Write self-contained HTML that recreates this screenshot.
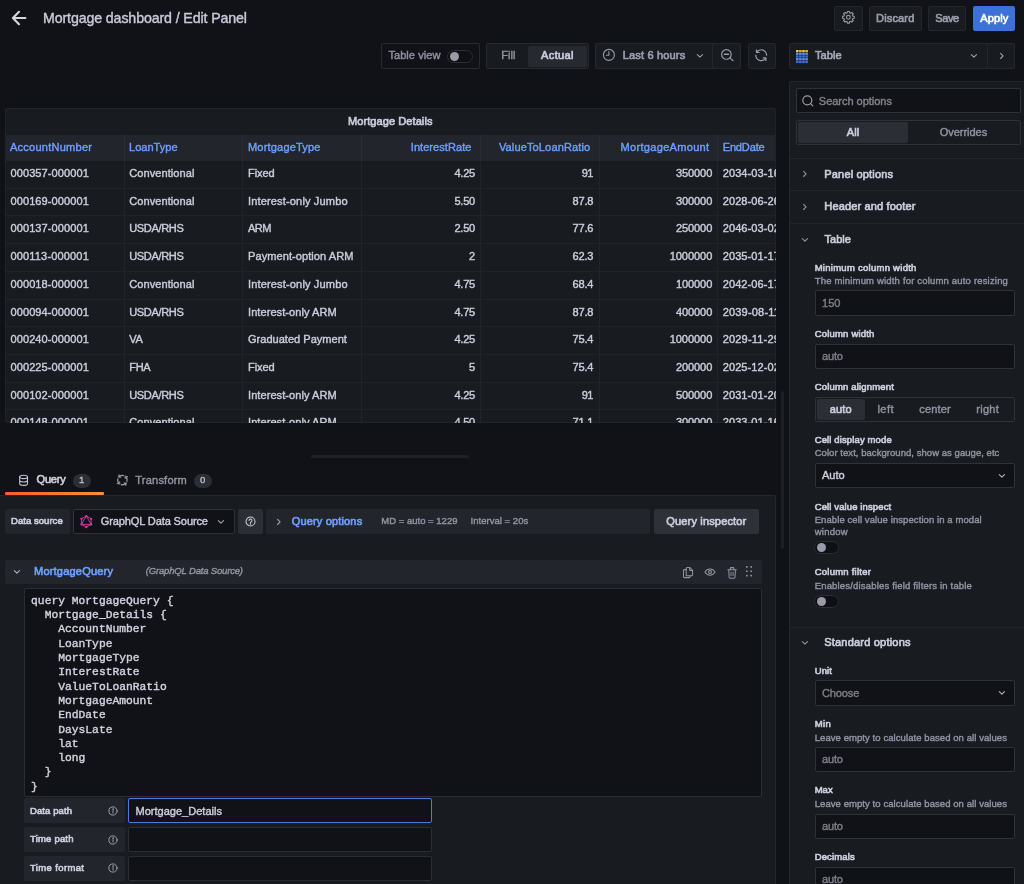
<!DOCTYPE html>
<html lang="en"><head><meta charset="utf-8"><title>Mortgage dashboard / Edit Panel - Grafana</title>
<style>
html,body{margin:0;padding:0;background:#111217;}
body{width:1024px;height:884px;position:relative;overflow:hidden;font-family:"Liberation Sans",sans-serif;}
#app{position:absolute;left:0;top:0;width:1024px;height:884px;overflow:hidden;will-change:transform;}
.b{position:absolute;box-sizing:border-box;}
.t{position:absolute;white-space:pre;margin:0;padding:0;font-weight:400;}
</style></head><body>
<div id="app">
<header class="page-toolbar">
<svg class="b" style="left:11px;top:9px" width="17" height="18" viewBox="0 0 17 18" fill="none" stroke="#d5d5e3" stroke-width="2.1" stroke-linecap="round" stroke-linejoin="round"><path d="M14.4 9H2.4M8 2.8L1.9 9L8 15.2"/></svg>
<h1 class="t" style="left:43.00px;top:8.49px;line-height:20px;font-size:14.2px;color:#c9c9d9;-webkit-text-stroke:0.4px;letter-spacing:-0.115px;">Mortgage dashboard / Edit Panel</h1>
<div class="b" style="left:834px;top:6px;width:29px;height:25px;background:#181b1f;border:1px solid #24272d;border-radius:2px;"></div>
<div class="b" style="left:869px;top:6px;width:53px;height:25px;background:#181b1f;border:1px solid #24272d;border-radius:2px;"></div>
<div class="b" style="left:928px;top:6px;width:38px;height:25px;background:#181b1f;border:1px solid #24272d;border-radius:2px;"></div>
<div class="b" style="left:973px;top:6px;width:42px;height:25px;background:#3d71d9;border-radius:2px;"></div>
<span class="t" style="left:876.10px;top:9.75px;line-height:16px;font-size:11.05px;color:#9d9dad;-webkit-text-stroke:0.65px;letter-spacing:0.124px;">Discard</span>
<span class="t" style="left:935.20px;top:9.75px;line-height:16px;font-size:11.05px;color:#9d9dad;-webkit-text-stroke:0.65px;letter-spacing:-0.396px;">Save</span>
<span class="t" style="left:980.20px;top:9.75px;line-height:16px;font-size:11.05px;color:#ffffff;-webkit-text-stroke:0.65px;letter-spacing:0.140px;">Apply</span>
</header>
<nav class="panel-toolbar">
<div class="b" style="left:381px;top:43px;width:99px;height:26px;background:#111217;border:1px solid #26292f;border-radius:2px;"></div>
<span class="t" style="left:388.40px;top:46.95px;line-height:16px;font-size:11.05px;color:#9393a2;-webkit-text-stroke:0.4px;letter-spacing:0.047px;">Table view</span>
<div class="b" style="left:447px;top:50px;width:26px;height:12.5px;background:#0f1014;border:1px solid #2b2e34;border-radius:7px;"></div>
<div class="b" style="left:449.8px;top:51.8px;width:9px;height:9px;background:#9a9aa8;border-radius:5px;"></div>
<div class="b" style="left:486px;top:43px;width:103px;height:26px;background:#181b1f;border:1px solid #26292f;border-radius:2px;"></div>
<div class="b" style="left:528px;top:45.5px;width:59px;height:21px;background:#26292f;border-radius:2px;"></div>
<span class="t" style="left:501.34px;top:47.15px;line-height:16px;font-size:11.05px;color:#9393a2;-webkit-text-stroke:0.4px;">Fill</span>
<span class="t" style="left:541.05px;top:47.15px;line-height:16px;font-size:11.05px;color:#ccccdc;-webkit-text-stroke:0.65px;letter-spacing:0.359px;">Actual</span>
<div class="b" style="left:595px;top:43px;width:118px;height:26px;background:#181b1f;border:1px solid #24272d;border-radius:2px;border-top-right-radius:0;border-bottom-right-radius:0;"></div>
<div class="b" style="left:712px;top:43px;width:29px;height:26px;background:#181b1f;border:1px solid #24272d;border-radius:2px;border-top-left-radius:0;border-bottom-left-radius:0;"></div>
<span class="t" style="left:622.70px;top:46.95px;line-height:16px;font-size:11.05px;color:#9d9dad;-webkit-text-stroke:0.65px;letter-spacing:0.155px;">Last 6 hours</span>
<div class="b" style="left:748px;top:43px;width:28px;height:26px;background:#181b1f;border:1px solid #24272d;border-radius:2px;"></div>
<div class="b" style="left:789px;top:43px;width:199px;height:26px;background:#181b1f;border:1px solid #24272d;border-radius:2px;border-top-right-radius:0;border-bottom-right-radius:0;"></div>
<div class="b" style="left:987px;top:43px;width:28px;height:26px;background:#181b1f;border:1px solid #24272d;border-radius:2px;border-top-left-radius:0;border-bottom-left-radius:0;"></div>
<span class="t" style="left:815.00px;top:46.95px;line-height:16px;font-size:11.05px;color:#a6a6b6;-webkit-text-stroke:0.65px;letter-spacing:0.070px;">Table</span>
</nav>
<main class="panel-preview">
<div class="b" style="left:5px;top:108px;width:771px;height:315px;background:#181b1f;border:1px solid #202329;border-radius:2px;"></div>
<h2 class="t" style="left:347.95px;top:112.95px;line-height:16px;font-size:11.05px;color:#ccccdc;-webkit-text-stroke:0.65px;letter-spacing:0.066px;">Mortgage Details</h2>
<div class="b" style="left:6px;top:134.6px;width:769px;height:26.6px;background:#22252b;"></div>
<div class="b" style="left:6px;top:134px;width:769px;height:288.4px;overflow:hidden">
<div class="b" style="left:118.0px;top:1px;width:1px;height:26px;background:#2a2d33"></div>
<div class="b" style="left:118.0px;top:27px;width:1px;height:263px;background:#212429"></div>
<div class="b" style="left:235.6px;top:1px;width:1px;height:26px;background:#2a2d33"></div>
<div class="b" style="left:235.6px;top:27px;width:1px;height:263px;background:#212429"></div>
<div class="b" style="left:355.0px;top:1px;width:1px;height:26px;background:#2a2d33"></div>
<div class="b" style="left:355.0px;top:27px;width:1px;height:263px;background:#212429"></div>
<div class="b" style="left:474.3px;top:1px;width:1px;height:26px;background:#2a2d33"></div>
<div class="b" style="left:474.3px;top:27px;width:1px;height:263px;background:#212429"></div>
<div class="b" style="left:593.0px;top:1px;width:1px;height:26px;background:#2a2d33"></div>
<div class="b" style="left:593.0px;top:27px;width:1px;height:263px;background:#212429"></div>
<div class="b" style="left:711.3px;top:1px;width:1px;height:26px;background:#2a2d33"></div>
<div class="b" style="left:711.3px;top:27px;width:1px;height:263px;background:#212429"></div>
<div class="b" style="left:0;top:53.9px;width:769px;height:1px;background:#202328"></div>
<div class="b" style="left:0;top:81.2px;width:769px;height:1px;background:#202328"></div>
<div class="b" style="left:0;top:109.0px;width:769px;height:1px;background:#202328"></div>
<div class="b" style="left:0;top:136.7px;width:769px;height:1px;background:#202328"></div>
<div class="b" style="left:0;top:165.2px;width:769px;height:1px;background:#202328"></div>
<div class="b" style="left:0;top:192.2px;width:769px;height:1px;background:#202328"></div>
<div class="b" style="left:0;top:219.9px;width:769px;height:1px;background:#202328"></div>
<div class="b" style="left:0;top:247.6px;width:769px;height:1px;background:#202328"></div>
<div class="b" style="left:0;top:275.4px;width:769px;height:1px;background:#202328"></div>
</div>
<span class="t" style="left:10.00px;top:138.65px;line-height:16px;font-size:11.05px;color:#6e9fff;-webkit-text-stroke:0.4px;letter-spacing:0.232px;">AccountNumber</span>
<span class="t" style="left:129.00px;top:138.65px;line-height:16px;font-size:11.05px;color:#6e9fff;-webkit-text-stroke:0.4px;">LoanType</span>
<span class="t" style="left:248.00px;top:138.65px;line-height:16px;font-size:11.05px;color:#6e9fff;-webkit-text-stroke:0.4px;letter-spacing:0.170px;">MortgageType</span>
<span class="t" style="left:410.80px;top:138.65px;line-height:16px;font-size:11.05px;color:#6e9fff;-webkit-text-stroke:0.4px;letter-spacing:0.038px;">InterestRate</span>
<span class="t" style="left:498.90px;top:138.65px;line-height:16px;font-size:11.05px;color:#6e9fff;-webkit-text-stroke:0.4px;letter-spacing:0.122px;">ValueToLoanRatio</span>
<span class="t" style="left:620.60px;top:138.65px;line-height:16px;font-size:11.05px;color:#6e9fff;-webkit-text-stroke:0.4px;letter-spacing:0.288px;">MortgageAmount</span>
<span class="t" style="left:722.70px;top:138.65px;line-height:16px;font-size:11.05px;color:#6e9fff;-webkit-text-stroke:0.4px;letter-spacing:-0.167px;">EndDate</span>
<div class="b" style="left:6px;top:134px;width:769.5px;height:288.6px;overflow:hidden"><div class="b" style="left:-6px;top:-134px;width:1024px;height:884px">
<span class="t" style="left:10.50px;top:165.35px;line-height:16px;font-size:11.05px;color:#ccccdc;-webkit-text-stroke:0.4px;letter-spacing:0.074px;">000357-000001</span>
<span class="t" style="left:129.20px;top:165.35px;line-height:16px;font-size:11.05px;color:#ccccdc;-webkit-text-stroke:0.4px;letter-spacing:0.064px;">Conventional</span>
<span class="t" style="left:248.00px;top:165.35px;line-height:16px;font-size:11.05px;color:#ccccdc;-webkit-text-stroke:0.4px;letter-spacing:-0.104px;">Fixed</span>
<span class="t" style="left:454.40px;top:165.35px;line-height:16px;font-size:11.05px;color:#ccccdc;-webkit-text-stroke:0.4px;letter-spacing:-0.239px;">4.25</span>
<span class="t" style="left:581.80px;top:165.35px;line-height:16px;font-size:11.05px;color:#ccccdc;-webkit-text-stroke:0.4px;letter-spacing:-0.697px;">91</span>
<span class="t" style="left:675.90px;top:165.35px;line-height:16px;font-size:11.05px;color:#ccccdc;-webkit-text-stroke:0.4px;letter-spacing:-0.095px;">350000</span>
<span class="t" style="left:722.70px;top:165.35px;line-height:16px;font-size:11.05px;color:#ccccdc;-webkit-text-stroke:0.4px;letter-spacing:0.076px;">2034-03-16</span>
<span class="t" style="left:10.50px;top:193.05px;line-height:16px;font-size:11.05px;color:#ccccdc;-webkit-text-stroke:0.4px;letter-spacing:0.074px;">000169-000001</span>
<span class="t" style="left:129.20px;top:193.05px;line-height:16px;font-size:11.05px;color:#ccccdc;-webkit-text-stroke:0.4px;letter-spacing:0.064px;">Conventional</span>
<span class="t" style="left:248.00px;top:193.05px;line-height:16px;font-size:11.05px;color:#ccccdc;-webkit-text-stroke:0.4px;letter-spacing:0.144px;">Interest-only Jumbo</span>
<span class="t" style="left:454.40px;top:193.05px;line-height:16px;font-size:11.05px;color:#ccccdc;-webkit-text-stroke:0.4px;letter-spacing:-0.239px;">5.50</span>
<span class="t" style="left:572.60px;top:193.05px;line-height:16px;font-size:11.05px;color:#ccccdc;-webkit-text-stroke:0.4px;letter-spacing:-0.239px;">87.8</span>
<span class="t" style="left:675.90px;top:193.05px;line-height:16px;font-size:11.05px;color:#ccccdc;-webkit-text-stroke:0.4px;letter-spacing:-0.095px;">300000</span>
<span class="t" style="left:722.70px;top:193.05px;line-height:16px;font-size:11.05px;color:#ccccdc;-webkit-text-stroke:0.4px;letter-spacing:0.076px;">2028-06-26</span>
<span class="t" style="left:10.50px;top:220.15px;line-height:16px;font-size:11.05px;color:#ccccdc;-webkit-text-stroke:0.4px;letter-spacing:0.074px;">000137-000001</span>
<span class="t" style="left:129.20px;top:220.15px;line-height:16px;font-size:11.05px;color:#ccccdc;-webkit-text-stroke:0.4px;letter-spacing:-0.342px;">USDA/RHS</span>
<span class="t" style="left:248.00px;top:220.15px;line-height:16px;font-size:11.05px;color:#ccccdc;-webkit-text-stroke:0.4px;letter-spacing:-0.581px;">ARM</span>
<span class="t" style="left:454.40px;top:220.15px;line-height:16px;font-size:11.05px;color:#ccccdc;-webkit-text-stroke:0.4px;letter-spacing:-0.239px;">2.50</span>
<span class="t" style="left:572.60px;top:220.15px;line-height:16px;font-size:11.05px;color:#ccccdc;-webkit-text-stroke:0.4px;letter-spacing:-0.239px;">77.6</span>
<span class="t" style="left:675.90px;top:220.15px;line-height:16px;font-size:11.05px;color:#ccccdc;-webkit-text-stroke:0.4px;letter-spacing:-0.095px;">250000</span>
<span class="t" style="left:722.70px;top:220.15px;line-height:16px;font-size:11.05px;color:#ccccdc;-webkit-text-stroke:0.4px;letter-spacing:0.076px;">2046-03-02</span>
<span class="t" style="left:10.50px;top:248.45px;line-height:16px;font-size:11.05px;color:#ccccdc;-webkit-text-stroke:0.4px;letter-spacing:0.142px;">000113-000001</span>
<span class="t" style="left:129.20px;top:248.45px;line-height:16px;font-size:11.05px;color:#ccccdc;-webkit-text-stroke:0.4px;letter-spacing:-0.342px;">USDA/RHS</span>
<span class="t" style="left:248.00px;top:248.45px;line-height:16px;font-size:11.05px;color:#ccccdc;-webkit-text-stroke:0.4px;letter-spacing:0.065px;">Payment-option ARM</span>
<span class="t" style="left:469.04px;top:248.45px;line-height:16px;font-size:11.05px;color:#ccccdc;-webkit-text-stroke:0.4px;">2</span>
<span class="t" style="left:572.60px;top:248.45px;line-height:16px;font-size:11.05px;color:#ccccdc;-webkit-text-stroke:0.4px;letter-spacing:-0.239px;">62.3</span>
<span class="t" style="left:669.70px;top:248.45px;line-height:16px;font-size:11.05px;color:#ccccdc;-webkit-text-stroke:0.4px;letter-spacing:-0.069px;">1000000</span>
<span class="t" style="left:722.70px;top:248.45px;line-height:16px;font-size:11.05px;color:#ccccdc;-webkit-text-stroke:0.4px;letter-spacing:0.076px;">2035-01-17</span>
<span class="t" style="left:10.50px;top:276.15px;line-height:16px;font-size:11.05px;color:#ccccdc;-webkit-text-stroke:0.4px;letter-spacing:0.074px;">000018-000001</span>
<span class="t" style="left:129.20px;top:276.15px;line-height:16px;font-size:11.05px;color:#ccccdc;-webkit-text-stroke:0.4px;letter-spacing:0.064px;">Conventional</span>
<span class="t" style="left:248.00px;top:276.15px;line-height:16px;font-size:11.05px;color:#ccccdc;-webkit-text-stroke:0.4px;letter-spacing:0.144px;">Interest-only Jumbo</span>
<span class="t" style="left:454.40px;top:276.15px;line-height:16px;font-size:11.05px;color:#ccccdc;-webkit-text-stroke:0.4px;letter-spacing:-0.239px;">4.75</span>
<span class="t" style="left:572.60px;top:276.15px;line-height:16px;font-size:11.05px;color:#ccccdc;-webkit-text-stroke:0.4px;letter-spacing:-0.239px;">68.4</span>
<span class="t" style="left:675.90px;top:276.15px;line-height:16px;font-size:11.05px;color:#ccccdc;-webkit-text-stroke:0.4px;letter-spacing:-0.095px;">100000</span>
<span class="t" style="left:722.70px;top:276.15px;line-height:16px;font-size:11.05px;color:#ccccdc;-webkit-text-stroke:0.4px;letter-spacing:0.076px;">2042-06-17</span>
<span class="t" style="left:10.50px;top:303.85px;line-height:16px;font-size:11.05px;color:#ccccdc;-webkit-text-stroke:0.4px;letter-spacing:0.074px;">000094-000001</span>
<span class="t" style="left:129.20px;top:303.85px;line-height:16px;font-size:11.05px;color:#ccccdc;-webkit-text-stroke:0.4px;letter-spacing:-0.342px;">USDA/RHS</span>
<span class="t" style="left:248.00px;top:303.85px;line-height:16px;font-size:11.05px;color:#ccccdc;-webkit-text-stroke:0.4px;letter-spacing:0.056px;">Interest-only ARM</span>
<span class="t" style="left:454.40px;top:303.85px;line-height:16px;font-size:11.05px;color:#ccccdc;-webkit-text-stroke:0.4px;letter-spacing:-0.239px;">4.75</span>
<span class="t" style="left:572.60px;top:303.85px;line-height:16px;font-size:11.05px;color:#ccccdc;-webkit-text-stroke:0.4px;letter-spacing:-0.239px;">87.8</span>
<span class="t" style="left:675.90px;top:303.85px;line-height:16px;font-size:11.05px;color:#ccccdc;-webkit-text-stroke:0.4px;letter-spacing:-0.095px;">400000</span>
<span class="t" style="left:722.70px;top:303.85px;line-height:16px;font-size:11.05px;color:#ccccdc;-webkit-text-stroke:0.4px;letter-spacing:0.168px;">2039-08-11</span>
<span class="t" style="left:10.50px;top:330.95px;line-height:16px;font-size:11.05px;color:#ccccdc;-webkit-text-stroke:0.4px;letter-spacing:0.074px;">000240-000001</span>
<span class="t" style="left:129.20px;top:330.95px;line-height:16px;font-size:11.05px;color:#ccccdc;-webkit-text-stroke:0.4px;letter-spacing:-0.222px;">VA</span>
<span class="t" style="left:248.00px;top:330.95px;line-height:16px;font-size:11.05px;color:#ccccdc;-webkit-text-stroke:0.4px;">Graduated Payment</span>
<span class="t" style="left:454.40px;top:330.95px;line-height:16px;font-size:11.05px;color:#ccccdc;-webkit-text-stroke:0.4px;letter-spacing:-0.239px;">4.25</span>
<span class="t" style="left:572.60px;top:330.95px;line-height:16px;font-size:11.05px;color:#ccccdc;-webkit-text-stroke:0.4px;letter-spacing:-0.239px;">75.4</span>
<span class="t" style="left:669.70px;top:330.95px;line-height:16px;font-size:11.05px;color:#ccccdc;-webkit-text-stroke:0.4px;letter-spacing:-0.069px;">1000000</span>
<span class="t" style="left:722.70px;top:330.95px;line-height:16px;font-size:11.05px;color:#ccccdc;-webkit-text-stroke:0.4px;letter-spacing:0.168px;">2029-11-29</span>
<span class="t" style="left:10.50px;top:359.25px;line-height:16px;font-size:11.05px;color:#ccccdc;-webkit-text-stroke:0.4px;letter-spacing:0.074px;">000225-000001</span>
<span class="t" style="left:129.20px;top:359.25px;line-height:16px;font-size:11.05px;color:#ccccdc;-webkit-text-stroke:0.4px;letter-spacing:-0.305px;">FHA</span>
<span class="t" style="left:248.00px;top:359.25px;line-height:16px;font-size:11.05px;color:#ccccdc;-webkit-text-stroke:0.4px;letter-spacing:-0.104px;">Fixed</span>
<span class="t" style="left:469.04px;top:359.25px;line-height:16px;font-size:11.05px;color:#ccccdc;-webkit-text-stroke:0.4px;">5</span>
<span class="t" style="left:572.60px;top:359.25px;line-height:16px;font-size:11.05px;color:#ccccdc;-webkit-text-stroke:0.4px;letter-spacing:-0.239px;">75.4</span>
<span class="t" style="left:675.90px;top:359.25px;line-height:16px;font-size:11.05px;color:#ccccdc;-webkit-text-stroke:0.4px;letter-spacing:-0.095px;">200000</span>
<span class="t" style="left:722.70px;top:359.25px;line-height:16px;font-size:11.05px;color:#ccccdc;-webkit-text-stroke:0.4px;letter-spacing:0.076px;">2025-12-02</span>
<span class="t" style="left:10.50px;top:386.95px;line-height:16px;font-size:11.05px;color:#ccccdc;-webkit-text-stroke:0.4px;letter-spacing:0.074px;">000102-000001</span>
<span class="t" style="left:129.20px;top:386.95px;line-height:16px;font-size:11.05px;color:#ccccdc;-webkit-text-stroke:0.4px;letter-spacing:-0.342px;">USDA/RHS</span>
<span class="t" style="left:248.00px;top:386.95px;line-height:16px;font-size:11.05px;color:#ccccdc;-webkit-text-stroke:0.4px;letter-spacing:0.056px;">Interest-only ARM</span>
<span class="t" style="left:454.40px;top:386.95px;line-height:16px;font-size:11.05px;color:#ccccdc;-webkit-text-stroke:0.4px;letter-spacing:-0.239px;">4.25</span>
<span class="t" style="left:581.80px;top:386.95px;line-height:16px;font-size:11.05px;color:#ccccdc;-webkit-text-stroke:0.4px;letter-spacing:-0.697px;">91</span>
<span class="t" style="left:675.90px;top:386.95px;line-height:16px;font-size:11.05px;color:#ccccdc;-webkit-text-stroke:0.4px;letter-spacing:-0.095px;">500000</span>
<span class="t" style="left:722.70px;top:386.95px;line-height:16px;font-size:11.05px;color:#ccccdc;-webkit-text-stroke:0.4px;letter-spacing:0.076px;">2031-01-20</span>
<span class="t" style="left:10.50px;top:414.15px;line-height:16px;font-size:11.05px;color:#ccccdc;-webkit-text-stroke:0.4px;letter-spacing:0.074px;">000148-000001</span>
<span class="t" style="left:129.20px;top:414.15px;line-height:16px;font-size:11.05px;color:#ccccdc;-webkit-text-stroke:0.4px;letter-spacing:0.064px;">Conventional</span>
<span class="t" style="left:248.00px;top:414.15px;line-height:16px;font-size:11.05px;color:#ccccdc;-webkit-text-stroke:0.4px;letter-spacing:0.056px;">Interest-only ARM</span>
<span class="t" style="left:454.40px;top:414.15px;line-height:16px;font-size:11.05px;color:#ccccdc;-webkit-text-stroke:0.4px;letter-spacing:-0.239px;">4.50</span>
<span class="t" style="left:572.60px;top:414.15px;line-height:16px;font-size:11.05px;color:#ccccdc;-webkit-text-stroke:0.4px;letter-spacing:-0.239px;">71.1</span>
<span class="t" style="left:675.90px;top:414.15px;line-height:16px;font-size:11.05px;color:#ccccdc;-webkit-text-stroke:0.4px;letter-spacing:-0.095px;">300000</span>
<span class="t" style="left:722.70px;top:414.15px;line-height:16px;font-size:11.05px;color:#ccccdc;-webkit-text-stroke:0.4px;letter-spacing:0.076px;">2033-01-16</span>
</div></div>
<div class="b" style="left:311px;top:454.7px;width:158px;height:3.4px;background:#1e2025;border-radius:2px;"></div>
<div class="b" style="left:780.6px;top:390.6px;width:3px;height:158px;background:#1d2025;border-radius:1.5px;"></div>
</main>
<aside class="options-pane">
<div class="b" style="left:789px;top:81px;width:240px;height:810px;background:#181b1f;border:1px solid #24272d;border-radius:2px;"></div>
<div class="b" style="left:796px;top:88.4px;width:225px;height:25px;background:#111217;border:1px solid #2f3238;border-radius:2px;"></div>
<svg class="b" style="left:801.4px;top:94.2px" width="14" height="14" viewBox="0 0 14 14" fill="none" stroke="#9a9aaa" stroke-width="1.2" stroke-linecap="round" stroke-linejoin="round"><circle cx="6.3" cy="6.3" r="4.5"/><path d="M9.700 9.700L11.800 11.800"/></svg>
<span class="t" style="left:818.80px;top:92.65px;line-height:16px;font-size:11.05px;color:#82828f;-webkit-text-stroke:0.4px;letter-spacing:-0.039px;">Search options</span>
<div class="b" style="left:796px;top:120.3px;width:225px;height:25px;background:#181b1f;border:1px solid #2f3238;border-radius:2px;"></div>
<div class="b" style="left:798px;top:122.3px;width:110px;height:21px;background:#2b2e34;border-radius:2px;"></div>
<span class="t" style="left:846.86px;top:123.65px;line-height:16px;font-size:11.05px;color:#ccccdc;-webkit-text-stroke:0.65px;">All</span>
<span class="t" style="left:939.75px;top:123.65px;line-height:16px;font-size:11.05px;color:#9393a2;-webkit-text-stroke:0.4px;letter-spacing:-0.049px;">Overrides</span>
<div class="b" style="left:790px;top:158px;width:240px;height:1px;background:#222529;"></div>
<div class="b" style="left:790px;top:190.3px;width:240px;height:1px;background:#222529;"></div>
<div class="b" style="left:790px;top:222.8px;width:240px;height:1px;background:#222529;"></div>
<div class="b" style="left:790px;top:627.3px;width:240px;height:1px;background:#222529;"></div>
<svg class="b" style="left:802.2px;top:170.4px" width="6" height="8" viewBox="0 0 6 8" fill="none" stroke="#9393a2" stroke-width="1.1" stroke-linecap="round" stroke-linejoin="round"><path d="M1.6 1.3L4.1 3.9L1.6 6.5"/></svg>
<h3 class="t" style="left:824.30px;top:166.15px;line-height:16px;font-size:11.05px;color:#ccccdc;-webkit-text-stroke:0.65px;letter-spacing:0.146px;">Panel options</h3>
<svg class="b" style="left:802.2px;top:202.6px" width="6" height="8" viewBox="0 0 6 8" fill="none" stroke="#9393a2" stroke-width="1.1" stroke-linecap="round" stroke-linejoin="round"><path d="M1.6 1.3L4.1 3.9L1.6 6.5"/></svg>
<h3 class="t" style="left:824.30px;top:197.65px;line-height:16px;font-size:11.05px;color:#ccccdc;-webkit-text-stroke:0.65px;letter-spacing:0.134px;">Header and footer</h3>
<svg class="b" style="left:801.1px;top:236.7px" width="8" height="6" viewBox="0 0 8 6" fill="none" stroke="#9393a2" stroke-width="1.1" stroke-linecap="round" stroke-linejoin="round"><path d="M1.3 1.6L3.9 4.1L6.5 1.6"/></svg>
<h3 class="t" style="left:824.50px;top:231.15px;line-height:16px;font-size:11.05px;color:#ccccdc;-webkit-text-stroke:0.65px;letter-spacing:0.020px;">Table</h3>
<svg class="b" style="left:801.1px;top:640.2px" width="8" height="6" viewBox="0 0 8 6" fill="none" stroke="#9393a2" stroke-width="1.1" stroke-linecap="round" stroke-linejoin="round"><path d="M1.3 1.6L3.9 4.1L6.5 1.6"/></svg>
<h3 class="t" style="left:824.20px;top:634.15px;line-height:16px;font-size:11.05px;color:#ccccdc;-webkit-text-stroke:0.65px;letter-spacing:0.185px;">Standard options</h3>
<label class="t" style="left:814.70px;top:260.52px;line-height:14px;font-size:9.5px;color:#ccccdc;-webkit-text-stroke:0.65px;letter-spacing:0.267px;">Minimum column width</label>
<span class="t" style="left:814.70px;top:273.62px;line-height:14px;font-size:9.5px;color:#9393a2;-webkit-text-stroke:0.4px;letter-spacing:0.179px;">The minimum width for column auto resizing</span>
<div class="b" style="left:814.5px;top:290.4px;width:200.5px;height:25.2px;background:#111217;border:1px solid #2f3238;border-radius:2px;"></div>
<span class="t" style="left:822.00px;top:294.65px;line-height:16px;font-size:11.05px;color:#7d7d8a;-webkit-text-stroke:0.4px;letter-spacing:0.031px;">150</span>
<label class="t" style="left:814.70px;top:326.72px;line-height:14px;font-size:9.5px;color:#ccccdc;-webkit-text-stroke:0.65px;letter-spacing:0.194px;">Column width</label>
<div class="b" style="left:814.5px;top:343.5px;width:200.5px;height:25px;background:#111217;border:1px solid #2f3238;border-radius:2px;"></div>
<span class="t" style="left:822.00px;top:347.65px;line-height:16px;font-size:11.05px;color:#7d7d8a;-webkit-text-stroke:0.4px;letter-spacing:-0.172px;">auto</span>
<label class="t" style="left:814.70px;top:379.52px;line-height:14px;font-size:9.5px;color:#ccccdc;-webkit-text-stroke:0.65px;letter-spacing:0.175px;">Column alignment</label>
<div class="b" style="left:814.5px;top:397px;width:200.5px;height:25px;background:#181b1f;border:1px solid #2f3238;border-radius:2px;"></div>
<div class="b" style="left:817px;top:399.2px;width:48px;height:20.8px;background:#2b2e34;border-radius:2px;"></div>
<span class="t" style="left:829.70px;top:400.65px;line-height:16px;font-size:11.05px;color:#ccccdc;-webkit-text-stroke:0.65px;letter-spacing:0.161px;">auto</span>
<span class="t" style="left:877.50px;top:400.65px;line-height:16px;font-size:11.05px;color:#9393a2;-webkit-text-stroke:0.4px;letter-spacing:0.417px;">left</span>
<span class="t" style="left:919.25px;top:400.65px;line-height:16px;font-size:11.05px;color:#9393a2;-webkit-text-stroke:0.4px;letter-spacing:0.159px;">center</span>
<span class="t" style="left:976.25px;top:400.65px;line-height:16px;font-size:11.05px;color:#9393a2;-webkit-text-stroke:0.4px;letter-spacing:0.250px;">right</span>
<label class="t" style="left:814.70px;top:432.52px;line-height:14px;font-size:9.5px;color:#ccccdc;-webkit-text-stroke:0.65px;letter-spacing:0.126px;">Cell display mode</label>
<span class="t" style="left:814.70px;top:445.52px;line-height:14px;font-size:9.5px;color:#9393a2;-webkit-text-stroke:0.4px;letter-spacing:0.048px;">Color text, background, show as gauge, etc</span>
<div class="b" style="left:814.5px;top:463.4px;width:200.5px;height:24.3px;background:#111217;border:1px solid #2f3238;border-radius:2px;"></div>
<span class="t" style="left:822.00px;top:466.70px;line-height:16px;font-size:11.05px;color:#ccccdc;-webkit-text-stroke:0.4px;letter-spacing:-0.011px;">Auto</span>
<svg class="b" style="left:997.6px;top:473.04999999999995px" width="8" height="6" viewBox="0 0 8 6" fill="none" stroke="#b0b0c0" stroke-width="1.1" stroke-linecap="round" stroke-linejoin="round"><path d="M1.3 1.6L3.9 4.1L6.5 1.6"/></svg>
<label class="t" style="left:814.70px;top:499.52px;line-height:14px;font-size:9.5px;color:#ccccdc;-webkit-text-stroke:0.65px;letter-spacing:0.119px;">Cell value inspect</label>
<span class="t" style="left:814.70px;top:512.62px;line-height:14px;font-size:9.5px;color:#9393a2;-webkit-text-stroke:0.4px;letter-spacing:0.086px;">Enable cell value inspection in a modal</span>
<span class="t" style="left:814.70px;top:524.82px;line-height:14px;font-size:9.5px;color:#9393a2;-webkit-text-stroke:0.4px;letter-spacing:0.263px;">window</span>
<div class="b" style="left:814px;top:541.2px;width:25.4px;height:12.8px;background:#0f1014;border:1px solid #2b2e34;border-radius:7px;"></div>
<div class="b" style="left:816.5px;top:542.8000000000001px;width:9.6px;height:9.6px;background:#9a9aa8;border-radius:5px;"></div>
<label class="t" style="left:814.70px;top:564.52px;line-height:14px;font-size:9.5px;color:#ccccdc;-webkit-text-stroke:0.65px;letter-spacing:0.239px;">Column filter</label>
<span class="t" style="left:814.70px;top:578.62px;line-height:14px;font-size:9.5px;color:#9393a2;-webkit-text-stroke:0.4px;letter-spacing:0.176px;">Enables/disables field filters in table</span>
<div class="b" style="left:814px;top:595.2px;width:25.4px;height:12.8px;background:#0f1014;border:1px solid #2b2e34;border-radius:7px;"></div>
<div class="b" style="left:816.5px;top:596.8000000000001px;width:9.6px;height:9.6px;background:#9a9aa8;border-radius:5px;"></div>
<label class="t" style="left:814.70px;top:663.62px;line-height:14px;font-size:9.5px;color:#ccccdc;-webkit-text-stroke:0.65px;letter-spacing:0.131px;">Unit</label>
<div class="b" style="left:814.5px;top:680px;width:200.5px;height:25.5px;background:#111217;border:1px solid #2f3238;border-radius:2px;"></div>
<span class="t" style="left:822.00px;top:685.30px;line-height:16px;font-size:11.05px;color:#7d7d8a;-webkit-text-stroke:0.4px;letter-spacing:-0.156px;">Choose</span>
<svg class="b" style="left:997.6px;top:690.25px" width="8" height="6" viewBox="0 0 8 6" fill="none" stroke="#b0b0c0" stroke-width="1.1" stroke-linecap="round" stroke-linejoin="round"><path d="M1.3 1.6L3.9 4.1L6.5 1.6"/></svg>
<label class="t" style="left:814.70px;top:716.73px;line-height:14px;font-size:9.5px;color:#ccccdc;-webkit-text-stroke:0.65px;letter-spacing:0.344px;">Min</label>
<span class="t" style="left:814.70px;top:730.52px;line-height:14px;font-size:9.5px;color:#9393a2;-webkit-text-stroke:0.4px;letter-spacing:0.075px;">Leave empty to calculate based on all values</span>
<div class="b" style="left:814.5px;top:747.4px;width:200.5px;height:25px;background:#111217;border:1px solid #2f3238;border-radius:2px;"></div>
<span class="t" style="left:822.00px;top:750.95px;line-height:16px;font-size:11.05px;color:#7d7d8a;-webkit-text-stroke:0.4px;letter-spacing:-0.172px;">auto</span>
<label class="t" style="left:814.70px;top:782.52px;line-height:14px;font-size:9.5px;color:#ccccdc;-webkit-text-stroke:0.65px;letter-spacing:0.023px;">Max</label>
<span class="t" style="left:814.70px;top:796.62px;line-height:14px;font-size:9.5px;color:#9393a2;-webkit-text-stroke:0.4px;letter-spacing:0.075px;">Leave empty to calculate based on all values</span>
<div class="b" style="left:814.5px;top:813.8px;width:200.5px;height:24.8px;background:#111217;border:1px solid #2f3238;border-radius:2px;"></div>
<span class="t" style="left:822.00px;top:817.85px;line-height:16px;font-size:11.05px;color:#7d7d8a;-webkit-text-stroke:0.4px;letter-spacing:-0.172px;">auto</span>
<label class="t" style="left:814.70px;top:849.52px;line-height:14px;font-size:9.5px;color:#ccccdc;-webkit-text-stroke:0.65px;letter-spacing:0.134px;">Decimals</label>
<div class="b" style="left:814.5px;top:867px;width:200.5px;height:25px;background:#111217;border:1px solid #2f3238;border-radius:2px;"></div>
<span class="t" style="left:822.00px;top:871.15px;line-height:16px;font-size:11.05px;color:#7d7d8a;-webkit-text-stroke:0.4px;letter-spacing:-0.172px;">auto</span>
</aside>
<section class="query-editor">
<div class="b" style="left:0px;top:495px;width:776px;height:400px;background:#181b1f;border-top:1px solid #24272d;border-right:1px solid #24272d;border-top-right-radius:2px;"></div>
<div class="b" style="left:5px;top:491.6px;width:98.5px;height:3.2px;border-radius:1px;background:linear-gradient(90deg,#f4622c 0%,#f8772e 50%,#fc8d36 100%);"></div>
<svg class="b" style="left:18px;top:474px" width="12" height="13" viewBox="0 0 12 13" fill="none" stroke="#c4c4d4" stroke-width="1.1" stroke-linecap="round" stroke-linejoin="round"><ellipse cx="5.6" cy="2.9" rx="3.9" ry="1.7"/><path d="M1.700 2.900v6.800c0 .95 1.750 1.700 3.900 1.700s3.900-.75 3.900-1.700V2.900M1.700 6.300c0 .95 1.750 1.700 3.900 1.700s3.900-.75 3.900-1.700"/></svg>
<span class="t" style="left:36.50px;top:471.45px;line-height:16px;font-size:11.05px;color:#ccccdc;-webkit-text-stroke:0.65px;letter-spacing:-0.198px;">Query</span>
<div class="b" style="left:72.8px;top:473.8px;width:17.8px;height:14px;background:#2b2e34;border-radius:7px;"></div>
<span class="t" style="left:78.95px;top:473.12px;line-height:14px;font-size:9.5px;color:#b8b8c8;-webkit-text-stroke:0.4px;">1</span>
<svg class="b" style="left:116px;top:474px" width="13" height="12" viewBox="0 0 13 12" fill="none" stroke="#9a9aaa" stroke-width="1.25" stroke-linecap="round" stroke-linejoin="round"><path d="M7.54 1.54A4.7 4.7 0 0 0 3.77 2.20"/><path d="M2.20 3.27L2.96 0.46L4.86 3.28Z" fill="#9a9aaa" stroke-width="0.5"/><path d="M1.84 4.96A4.7 4.7 0 0 0 2.50 8.73"/><path d="M3.57 10.30L0.76 9.54L3.58 7.64Z" fill="#9a9aaa" stroke-width="0.5"/><path d="M5.26 10.66A4.7 4.7 0 0 0 9.03 10.00"/><path d="M10.60 8.93L9.84 11.74L7.94 8.92Z" fill="#9a9aaa" stroke-width="0.5"/><path d="M10.96 7.24A4.7 4.7 0 0 0 10.30 3.47"/><path d="M9.23 1.90L12.04 2.66L9.22 4.56Z" fill="#9a9aaa" stroke-width="0.5"/></svg>
<span class="t" style="left:135.30px;top:471.95px;line-height:16px;font-size:11.05px;color:#9393a2;-webkit-text-stroke:0.4px;letter-spacing:0.197px;">Transform</span>
<div class="b" style="left:193.8px;top:473.8px;width:17.8px;height:14px;background:#2b2e34;border-radius:7px;"></div>
<span class="t" style="left:199.95px;top:473.12px;line-height:14px;font-size:9.5px;color:#b8b8c8;-webkit-text-stroke:0.4px;">0</span>
<div class="b" style="left:5px;top:509.2px;width:64.5px;height:24.6px;background:#22252b;border-radius:2px;"></div>
<span class="t" style="left:11.00px;top:514.12px;line-height:14px;font-size:9.5px;color:#ccccdc;-webkit-text-stroke:0.65px;letter-spacing:0.047px;">Data source</span>
<div class="b" style="left:72.7px;top:509.2px;width:162px;height:24.6px;background:#111217;border:1px solid #2f3238;border-radius:2px;"></div>
<svg class="b" style="left:0;top:0" width="120" height="540" viewBox="0 0 120 540" fill="none" stroke="#e535ab" stroke-width="0.9"><polygon points="86.30,516.00 91.15,518.80 91.15,524.40 86.30,527.20 81.45,524.40 81.45,518.80"/><polygon points="86.30,516.00 91.15,524.40 81.45,524.40"/><circle cx="86.30" cy="516.00" r="1.1" fill="#e535ab" stroke="none"/><circle cx="91.15" cy="518.80" r="1.1" fill="#e535ab" stroke="none"/><circle cx="91.15" cy="524.40" r="1.1" fill="#e535ab" stroke="none"/><circle cx="86.30" cy="527.20" r="1.1" fill="#e535ab" stroke="none"/><circle cx="81.45" cy="524.40" r="1.1" fill="#e535ab" stroke="none"/><circle cx="81.45" cy="518.80" r="1.1" fill="#e535ab" stroke="none"/></svg>
<span class="t" style="left:100.80px;top:512.95px;line-height:16px;font-size:11.05px;color:#ccccdc;-webkit-text-stroke:0.4px;letter-spacing:-0.129px;">GraphQL Data Source</span>
<svg class="b" style="left:217.1px;top:519.2px" width="8" height="6" viewBox="0 0 8 6" fill="none" stroke="#a0a0b0" stroke-width="1.1" stroke-linecap="round" stroke-linejoin="round"><path d="M1.3 1.6L3.9 4.1L6.5 1.6"/></svg>
<div class="b" style="left:237.5px;top:509.2px;width:25.8px;height:24.6px;background:#2b2e34;border-radius:2px;"></div>
<svg class="b" style="left:244px;top:515px" width="13" height="13" viewBox="0 0 13 13" fill="none" stroke="#c8c8d8" stroke-width="1.05" stroke-linecap="round" stroke-linejoin="round"><circle cx="6.5" cy="6.5" r="4.500"/><path d="M5.100 5.400a1.450 1.450 0 1 1 2.100 1.300c-.45.25-.7.5-.7 1"/><circle cx="6.500" cy="8.900" r="0.300" fill="#c8c8d8"/></svg>
<div class="b" style="left:266.4px;top:509.2px;width:383.8px;height:24.6px;background:#22252b;border-radius:2px;"></div>
<svg class="b" style="left:275.7px;top:517.8000000000001px" width="6" height="8" viewBox="0 0 6 8" fill="none" stroke="#a0a0b0" stroke-width="1.1" stroke-linecap="round" stroke-linejoin="round"><path d="M1.6 1.3L4.1 3.9L1.6 6.5"/></svg>
<span class="t" style="left:291.70px;top:512.85px;line-height:16px;font-size:11.05px;color:#6e9fff;-webkit-text-stroke:0.65px;letter-spacing:0.143px;">Query options</span>
<span class="t" style="left:381.30px;top:514.12px;line-height:14px;font-size:9.5px;color:#9393a2;-webkit-text-stroke:0.4px;letter-spacing:0.009px;">MD = auto = 1229</span>
<span class="t" style="left:470.50px;top:514.12px;line-height:14px;font-size:9.5px;color:#9393a2;-webkit-text-stroke:0.4px;letter-spacing:0.031px;">Interval = 20s</span>
<div class="b" style="left:653.6px;top:509px;width:105.6px;height:24.8px;background:#2e3137;border-radius:2px;"></div>
<span class="t" style="left:666.30px;top:512.75px;line-height:16px;font-size:11.05px;color:#ccccdc;-webkit-text-stroke:0.65px;letter-spacing:0.144px;">Query inspector</span>
<div class="b" style="left:5px;top:559.5px;width:757px;height:24.8px;background:#22252b;border-radius:2px;"></div>
<svg class="b" style="left:13.1px;top:568.5px" width="8" height="6" viewBox="0 0 8 6" fill="none" stroke="#b0b0c0" stroke-width="1.1" stroke-linecap="round" stroke-linejoin="round"><path d="M1.3 1.6L3.9 4.1L6.5 1.6"/></svg>
<span class="t" style="left:34.00px;top:562.75px;line-height:16px;font-size:11.05px;color:#6e9fff;-webkit-text-stroke:0.65px;letter-spacing:0.186px;">MortgageQuery</span>
<span class="t" style="left:145.80px;top:564.12px;line-height:14px;font-size:9.5px;color:#9393a2;-webkit-text-stroke:0.4px;font-style:italic;letter-spacing:-0.174px;">(GraphQL Data Source)</span>
<svg class="b" style="left:682px;top:565.5px" width="12" height="13" viewBox="0 0 12 13" fill="none" stroke="#9292a2" stroke-width="1.05" stroke-linecap="round" stroke-linejoin="round"><path d="M4.300 9.700h5.300c.6 0 1-.4 1-1V4.400L7.800 1.500H5.200c-.6 0-1 .4-1 1v7.200z"/><path d="M7.700 1.600v2.900h2.800"/><path d="M4.200 3.600H2.500c-.6 0-1 .4-1 1v6c0 .6.400 1 1 1h4.600c.6 0 1-.4 1-1V9.800"/></svg>
<svg class="b" style="left:703px;top:566px" width="14" height="12" viewBox="0 0 14 12" fill="none" stroke="#9292a2" stroke-width="1.05" stroke-linecap="round" stroke-linejoin="round"><path d="M1.900 6.100C3.100 4 4.900 2.900 7 2.900s3.900 1.100 5.100 3.200C10.900 8.200 9.100 9.300 7 9.300S3.100 8.200 1.900 6.100z"/><circle cx="7" cy="6.100" r="1.500"/></svg>
<svg class="b" style="left:726px;top:565.5px" width="12" height="14" viewBox="0 0 12 14" fill="none" stroke="#9292a2" stroke-width="1.05" stroke-linecap="round" stroke-linejoin="round"><path d="M1.800 3.700h8.600M4.400 3.500V2.300c0-.4.300-.7.700-.7h2c.400 0 .7.300.7.700v1.200M2.800 3.900l.4 7.400c0 .5.400.9.900.9h4c.500 0 .9-.4.900-.9l.400-7.400"/><path d="M5.100 6.200v3.400M7.100 6.200v3.400" stroke-width=".9"/></svg>
<svg class="b" style="left:745.6px;top:566.2px" width="7" height="11" viewBox="0 0 7 11" fill="none" stroke="none" stroke-width="1.2" stroke-linecap="round" stroke-linejoin="round"><rect x="0" y="0" width="1.7" height="1.7" rx=".4" fill="#9292a2" stroke="none"/><rect x="0" y="4.4" width="1.7" height="1.7" rx=".4" fill="#9292a2" stroke="none"/><rect x="0" y="8.8" width="1.7" height="1.7" rx=".4" fill="#9292a2" stroke="none"/><rect x="4.3" y="0" width="1.7" height="1.7" rx=".4" fill="#9292a2" stroke="none"/><rect x="4.3" y="4.4" width="1.7" height="1.7" rx=".4" fill="#9292a2" stroke="none"/><rect x="4.3" y="8.8" width="1.7" height="1.7" rx=".4" fill="#9292a2" stroke="none"/></svg>
<div class="b" style="left:24.2px;top:588.2px;width:737.6px;height:209.2px;background:#111217;border:1px solid #2a2d33;border-radius:2px;"></div>
<pre class="b" style="left:31.1px;top:593.7px;margin:0;font-family:'Liberation Mono',monospace;font-size:11.3px;line-height:14.32px;color:#d2d2e0;font-weight:400;-webkit-text-stroke:0.4px;">query MortgageQuery {
  Mortgage_Details {
    AccountNumber
    LoanType
    MortgageType
    InterestRate
    ValueToLoanRatio
    MortgageAmount
    EndDate
    DaysLate
    lat
    long
  }
}</pre>
<div class="b" style="left:24.2px;top:798.3px;width:100.5px;height:25.2px;background:#22252b;border-radius:2px;"></div>
<label class="t" style="left:30.00px;top:803.62px;line-height:14px;font-size:9.5px;color:#ccccdc;-webkit-text-stroke:0.65px;letter-spacing:0.100px;">Data path</label>
<svg class="b" style="left:108px;top:805.9px" width="10" height="10" viewBox="0 0 10 10" fill="none" stroke="#a0a0b0" stroke-width="0.95" stroke-linecap="round" stroke-linejoin="round"><circle cx="5" cy="5" r="4.1"/><path d="M5 4.700v2.300"/><circle cx="5" cy="3.1" r="0.3" fill="#a0a0b0"/></svg>
<div class="b" style="left:128.2px;top:798.3px;width:304.2px;height:25.2px;background:#111217;border:1px solid #4d7bdc;border-radius:2px;"></div>
<span class="t" style="left:135.50px;top:802.55px;line-height:16px;font-size:11.05px;color:#ccccdc;-webkit-text-stroke:0.4px;letter-spacing:-0.006px;">Mortgage_Details</span>
<div class="b" style="left:24.2px;top:827px;width:100.5px;height:25.4px;background:#22252b;border-radius:2px;"></div>
<label class="t" style="left:30.00px;top:832.43px;line-height:14px;font-size:9.5px;color:#ccccdc;-webkit-text-stroke:0.65px;letter-spacing:0.201px;">Time path</label>
<svg class="b" style="left:108px;top:834.7px" width="10" height="10" viewBox="0 0 10 10" fill="none" stroke="#a0a0b0" stroke-width="0.95" stroke-linecap="round" stroke-linejoin="round"><circle cx="5" cy="5" r="4.1"/><path d="M5 4.700v2.300"/><circle cx="5" cy="3.1" r="0.3" fill="#a0a0b0"/></svg>
<div class="b" style="left:128.2px;top:827px;width:304.2px;height:25.4px;background:#111217;border:1px solid #2a2d33;border-radius:2px;"></div>
<div class="b" style="left:24.2px;top:855.5px;width:100.5px;height:25px;background:#22252b;border-radius:2px;"></div>
<label class="t" style="left:30.00px;top:860.73px;line-height:14px;font-size:9.5px;color:#ccccdc;-webkit-text-stroke:0.65px;letter-spacing:0.367px;">Time format</label>
<svg class="b" style="left:108px;top:863.0px" width="10" height="10" viewBox="0 0 10 10" fill="none" stroke="#a0a0b0" stroke-width="0.95" stroke-linecap="round" stroke-linejoin="round"><circle cx="5" cy="5" r="4.1"/><path d="M5 4.700v2.300"/><circle cx="5" cy="3.1" r="0.3" fill="#a0a0b0"/></svg>
<div class="b" style="left:128.2px;top:855.5px;width:304.2px;height:25px;background:#111217;border:1px solid #2a2d33;border-radius:2px;"></div>
</section>
<div class="toolbar-icons">
<svg class="b" style="left:841px;top:10.4px" width="15" height="15" viewBox="0 0 15 15" fill="none" stroke="#9a9aaa" stroke-width="1.1" stroke-linecap="round" stroke-linejoin="round"><path d="M6.39 1.49 L8.41 1.49 L8.54 2.84 L9.74 3.34 L10.79 2.47 L12.23 3.91 L11.36 4.96 L11.86 6.16 L13.21 6.29 L13.21 8.31 L11.86 8.44 L11.36 9.64 L12.23 10.69 L10.79 12.13 L9.74 11.26 L8.54 11.76 L8.41 13.11 L6.39 13.11 L6.26 11.76 L5.06 11.26 L4.01 12.13 L2.57 10.69 L3.44 9.64 L2.94 8.44 L1.59 8.31 L1.59 6.29 L2.94 6.16 L3.44 4.96 L2.57 3.91 L4.01 2.47 L5.06 3.34 L6.26 2.84Z"/><circle cx="7.4" cy="7.3" r="1.9"/></svg>
<svg class="b" style="left:602px;top:48.4px" width="14" height="14" viewBox="0 0 14 14" fill="none" stroke="#9a9aaa" stroke-width="1.1" stroke-linecap="round" stroke-linejoin="round"><circle cx="6.9" cy="6.9" r="5.5"/><path d="M6.9 3.600v3.600h-2.500"/></svg>
<svg class="b" style="left:695.5px;top:52.800000000000004px" width="8" height="6" viewBox="0 0 8 6" fill="none" stroke="#9a9aaa" stroke-width="1.1" stroke-linecap="round" stroke-linejoin="round"><path d="M1.3 1.6L3.9 4.1L6.5 1.6"/></svg>
<svg class="b" style="left:719.5px;top:48.4px" width="15" height="15" viewBox="0 0 15 15" fill="none" stroke="#9a9aaa" stroke-width="1.15" stroke-linecap="round" stroke-linejoin="round"><circle cx="6.4" cy="6.4" r="4.8"/><path d="M9.900 9.900l3.200 2.800"/><path d="M4.300 6.300h4.200" stroke-width="1.5"/></svg>
<svg class="b" style="left:754px;top:48.4px" width="14.4" height="14.4" viewBox="0 0 24 24" fill="#9a9aaa" stroke="none" stroke-width="1.2" stroke-linecap="round" stroke-linejoin="round"><path d="M19.91,15.51H15.38a1,1,0,0,0,0,2h2.4A8,8,0,0,1,4,12a1,1,0,0,0-2,0,10,10,0,0,0,16.88,7.23V21a1,1,0,0,0,2,0V16.5A1,1,0,0,0,19.910,15.510ZM12,2A10,10,0,0,0,5.120,4.770V3a1,1,0,0,0-2,0V7.500a1,1,0,0,0,1,1h4.500a1,1,0,0,0,0-2H6.220A8,8,0,0,1,20,12a1,1,0,0,0,2,0A10,10,0,0,0,12,2Z"/></svg>
<svg class="b" style="left:796px;top:49.5px" width="13" height="14" viewBox="0 0 13 14" fill="none" stroke="none" stroke-width="1.2" stroke-linecap="round" stroke-linejoin="round"><rect x="0.0" y="0.0" width="2.6" height="2.2" fill="#f5c242"/><rect x="3.1" y="0.0" width="2.6" height="2.2" fill="#f2b30c"/><rect x="6.2" y="0.0" width="2.6" height="2.2" fill="#f5c242"/><rect x="9.3" y="0.0" width="2.6" height="2.2" fill="#f2b30c"/><rect x="0.0" y="2.7" width="2.6" height="2.2" fill="#5794f2"/><rect x="3.1" y="2.7" width="2.6" height="2.2" fill="#5794f2"/><rect x="6.2" y="2.7" width="2.6" height="2.2" fill="#5794f2"/><rect x="9.3" y="2.7" width="2.6" height="2.2" fill="#5794f2"/><rect x="0.0" y="5.4" width="2.6" height="2.2" fill="#3d71d9"/><rect x="3.1" y="5.4" width="2.6" height="2.2" fill="#3d71d9"/><rect x="6.2" y="5.4" width="2.6" height="2.2" fill="#3d71d9"/><rect x="9.3" y="5.4" width="2.6" height="2.2" fill="#3d71d9"/><rect x="0.0" y="8.1" width="2.6" height="2.2" fill="#5794f2"/><rect x="3.1" y="8.1" width="2.6" height="2.2" fill="#5794f2"/><rect x="6.2" y="8.1" width="2.6" height="2.2" fill="#5794f2"/><rect x="9.3" y="8.1" width="2.6" height="2.2" fill="#5794f2"/><rect x="0.0" y="10.8" width="2.6" height="2.2" fill="#3d71d9"/><rect x="3.1" y="10.8" width="2.6" height="2.2" fill="#3d71d9"/><rect x="6.2" y="10.8" width="2.6" height="2.2" fill="#3d71d9"/><rect x="9.3" y="10.8" width="2.6" height="2.2" fill="#3d71d9"/></svg>
<svg class="b" style="left:970.1px;top:52.800000000000004px" width="8" height="6" viewBox="0 0 8 6" fill="none" stroke="#a0a0b0" stroke-width="1.1" stroke-linecap="round" stroke-linejoin="round"><path d="M1.3 1.6L3.9 4.1L6.5 1.6"/></svg>
<svg class="b" style="left:998.7px;top:51.5px" width="6" height="8" viewBox="0 0 6 8" fill="none" stroke="#a0a0b0" stroke-width="1.1" stroke-linecap="round" stroke-linejoin="round"><path d="M1.6 1.3L4.1 3.9L1.6 6.5"/></svg>
</div>
</div>
</body></html>
